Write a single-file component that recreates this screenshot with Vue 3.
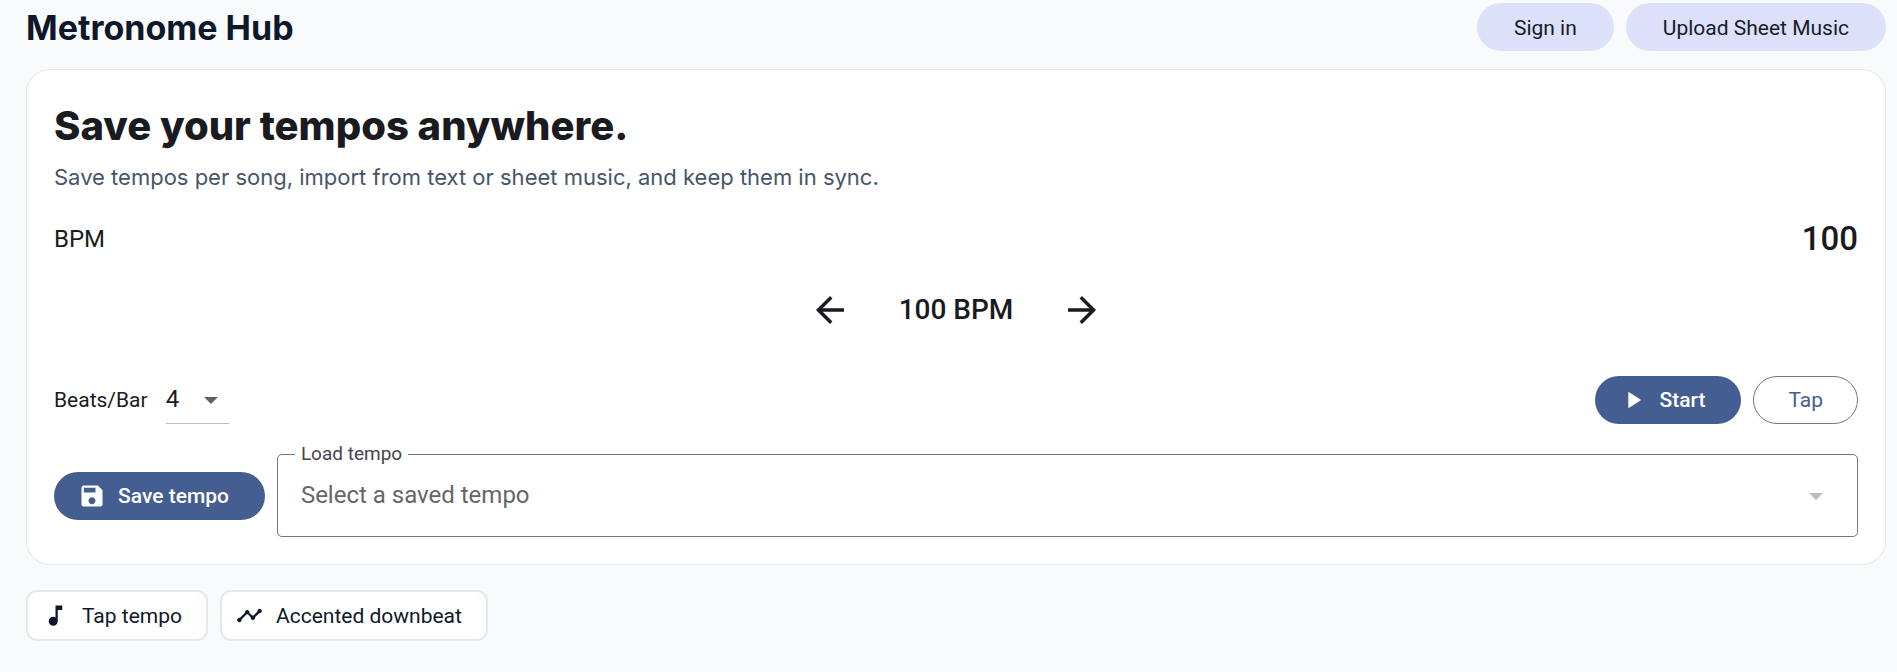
<script setup>
import { ref } from 'vue'

const bpm = ref(100)
const beats = ref(4)
const saved = ref('')
</script>

<template>
  <div class="page">
    <header class="topbar">
      <h1 class="brand">Metronome Hub</h1>
      <nav class="actions">
        <button type="button" class="btn tonal">Sign in</button>
        <button type="button" class="btn tonal">Upload Sheet Music</button>
      </nav>
    </header>

    <main class="card">
      <h2 class="title">Save your tempos anywhere.</h2>
      <p class="subtitle">Save tempos per song, import from text or sheet music, and keep them in sync.</p>

      <div class="row bpm-row">
        <span class="bpm-label">BPM</span>
        <span class="bpm-value">{{ bpm }}</span>
      </div>

      <div class="stepper">
        <button type="button" class="icon-btn" aria-label="Decrease tempo" @click="bpm--">
          <svg viewBox="0 0 24 24"><path d="M20 11H7.83l5.59-5.59L12 4l-8 8 8 8 1.41-1.41L7.83 13H20v-2z" /></svg>
        </button>
        <span class="stepper-value">{{ bpm }} BPM</span>
        <button type="button" class="icon-btn" aria-label="Increase tempo" @click="bpm++">
          <svg viewBox="0 0 24 24"><path d="M12 4l-1.41 1.41L16.17 11H4v2h12.17l-5.58 5.59L12 20l8-8z" /></svg>
        </button>
      </div>

      <div class="row controls">
        <div class="beats">
          <label for="beats" class="beats-label">Beats/Bar</label>
          <div class="beats-box">
            <select id="beats" v-model="beats" class="beats-select">
              <option v-for="n in [2, 3, 4, 5, 6, 7]" :key="n" :value="n">{{ n }}</option>
            </select>
            <svg class="caret" viewBox="0 0 14 7"><path d="M0 0h14l-7 7z" /></svg>
          </div>
        </div>
        <div class="actions">
          <button type="button" class="btn filled with-icon">
            <svg viewBox="0 0 24 24"><path d="M8 5v14l11-7z" /></svg>
            Start
          </button>
          <button type="button" class="btn outlined">Tap</button>
        </div>
      </div>

      <div class="load-row">
        <button type="button" class="btn filled with-icon">
          <svg viewBox="0 0 24 24"><path d="M17 3H5c-1.11 0-2 .9-2 2v14c0 1.1.89 2 2 2h14c1.1 0 2-.9 2-2V7l-4-4zm-5 16c-1.66 0-3-1.34-3-3s1.34-3 3-3 3 1.34 3 3-1.34 3-3 3zm3-10H5V5h10v4z" /></svg>
          Save tempo
        </button>
        <div class="field">
          <label for="load" class="field-label">Load tempo</label>
          <select id="load" v-model="saved" class="field-select">
            <option value="">Select a saved tempo</option>
          </select>
          <svg class="caret" viewBox="0 0 14 7"><path d="M0 0h14l-7 7z" /></svg>
        </div>
      </div>
    </main>

    <div class="chips">
      <div class="chip">
        <svg viewBox="0 0 24 24"><path d="M12 3v10.55c-.59-.34-1.27-.55-2-.55-2.21 0-4 1.79-4 4s1.79 4 4 4 4-1.79 4-4V7h4V3h-6z" /></svg>
        Tap tempo
      </div>
      <div class="chip">
        <svg viewBox="0 0 24 24"><path d="M23 8c0 1.1-.9 2-2 2-.18 0-.35-.02-.51-.07l-3.56 3.55c.05.16.07.34.07.52 0 1.1-.9 2-2 2s-2-.9-2-2c0-.18.02-.36.07-.52l-2.55-2.55c-.16.05-.34.07-.52.07s-.36-.02-.52-.07l-4.55 4.56c.05.16.07.33.07.51 0 1.1-.9 2-2 2s-2-.9-2-2 .9-2 2-2c.18 0 .35.02.51.07l4.56-4.55C8.02 9.36 8 9.18 8 9c0-1.1.9-2 2-2s2 .9 2 2c0 .18-.02.36-.07.52l2.55 2.55c.16-.05.34-.07.52-.07s.36.02.52.07l3.55-3.56C19.02 8.35 19 8.18 19 8c0-1.1.9-2 2-2s2 .9 2 2z" /></svg>
        Accented downbeat
      </div>
    </div>
  </div>
</template>

<style>
body {
  background: #f8fafc;
}
</style>

<style scoped>
.page {
  box-sizing: border-box;
  padding: 3px 11px 24px 26px;
  font-family: Roboto, "Noto Sans", sans-serif;
  font-size: 21px;
  line-height: 24px;
  color: #1a1b20;
}

svg {
  display: block;
  flex: none;
  fill: currentColor;
}

.topbar,
.row {
  display: flex;
  align-items: center;
  justify-content: space-between;
}

.brand {
  margin: 0;
  font: 700 34px/50px Inter, sans-serif;
  color: #0f172a;
}

.actions {
  display: flex;
  gap: 12px;
}

.topbar {
  align-items: flex-start;
}

.btn {
  display: flex;
  align-items: center;
  justify-content: center;
  box-sizing: border-box;
  height: 48px;
  padding: 0 36px;
  border: 0;
  border-radius: 24px;
  font: inherit;
  white-space: nowrap;
}

.tonal {
  padding: 2px 37px 0;
  background: #dce1f9;
  color: #151b2c;
}

.filled {
  background: #455e91;
  color: #fff;
  font-weight: 500;
}

.outlined {
  padding: 0 34px;
  background: transparent;
  border: 1px solid #75777f;
  color: #455e91;
}

.with-icon {
  gap: 12px;
  padding-left: 24px;
}

.with-icon svg {
  width: 28px;
  height: 28px;
}

.card {
  margin-top: 16px;
  padding: 27px;
  background: #fff;
  border: 1px solid #e2e8f0;
  border-radius: 24px;
}

.title {
  margin: 0;
  font: 800 40px/58px Inter, sans-serif;
}

.subtitle {
  margin: 6px 0 0;
  font: 400 22px/32px Inter, sans-serif;
  color: #475569;
}

.bpm-row {
  margin-top: 25px;
}

.bpm-label {
  font-size: 24px;
}

.bpm-value {
  font-size: 33px;
  font-weight: 500;
  line-height: 42px;
}

.stepper {
  display: flex;
  align-items: center;
  justify-content: center;
  gap: 40px;
  margin-top: 21px;
}

.icon-btn {
  padding: 8px;
  border: 0;
  background: none;
  color: inherit;
}

.icon-btn svg {
  width: 42px;
  height: 42px;
}

.stepper-value {
  font-size: 28px;
  font-weight: 500;
}

.controls {
  margin-top: 37px;
}

.beats {
  display: flex;
  align-items: center;
  gap: 18px;
}

.beats-box {
  position: relative;
  border-bottom: 1px solid #bdbdbd;
}

.beats-select,
.field-select {
  display: block;
  appearance: none;
  border: 0;
  background: none;
  font: 400 24px/28px Roboto, sans-serif;
}

.beats-select {
  width: 63px;
  height: 47px;
  padding: 0 24px 2px 0;
  color: #1a1b20;
}

.caret {
  position: absolute;
  top: calc(50% - 3px);
  right: 11px;
  width: 14px;
  height: 7px;
  color: #616161;
  pointer-events: none;
}

.load-row {
  display: flex;
  align-items: center;
  gap: 12px;
  margin-top: 30px;
}

.field {
  position: relative;
  flex: 1;
  border: 1px solid #75777f;
  border-radius: 5px;
}

.field-label {
  position: absolute;
  top: -13px;
  left: 17px;
  padding: 0 6px;
  background: #fff;
  font-size: 19px;
  color: #44464f;
}

.field-select {
  width: 100%;
  height: 81px;
  padding: 0 60px 2px 23px;
  color: #666;
}

.field .caret {
  right: 34px;
  color: #bdbdbd;
}

.chips {
  display: flex;
  gap: 12px;
  margin-top: 25px;
}

.chip {
  display: flex;
  align-items: center;
  gap: 13px;
  box-sizing: border-box;
  height: 51px;
  padding: 0 24px 0 14px;
  background: #fff;
  border: 2px solid #e2e8f0;
  border-radius: 11px;
  color: #0f172a;
}

.chip svg {
  width: 27px;
  height: 27px;
}
</style>
